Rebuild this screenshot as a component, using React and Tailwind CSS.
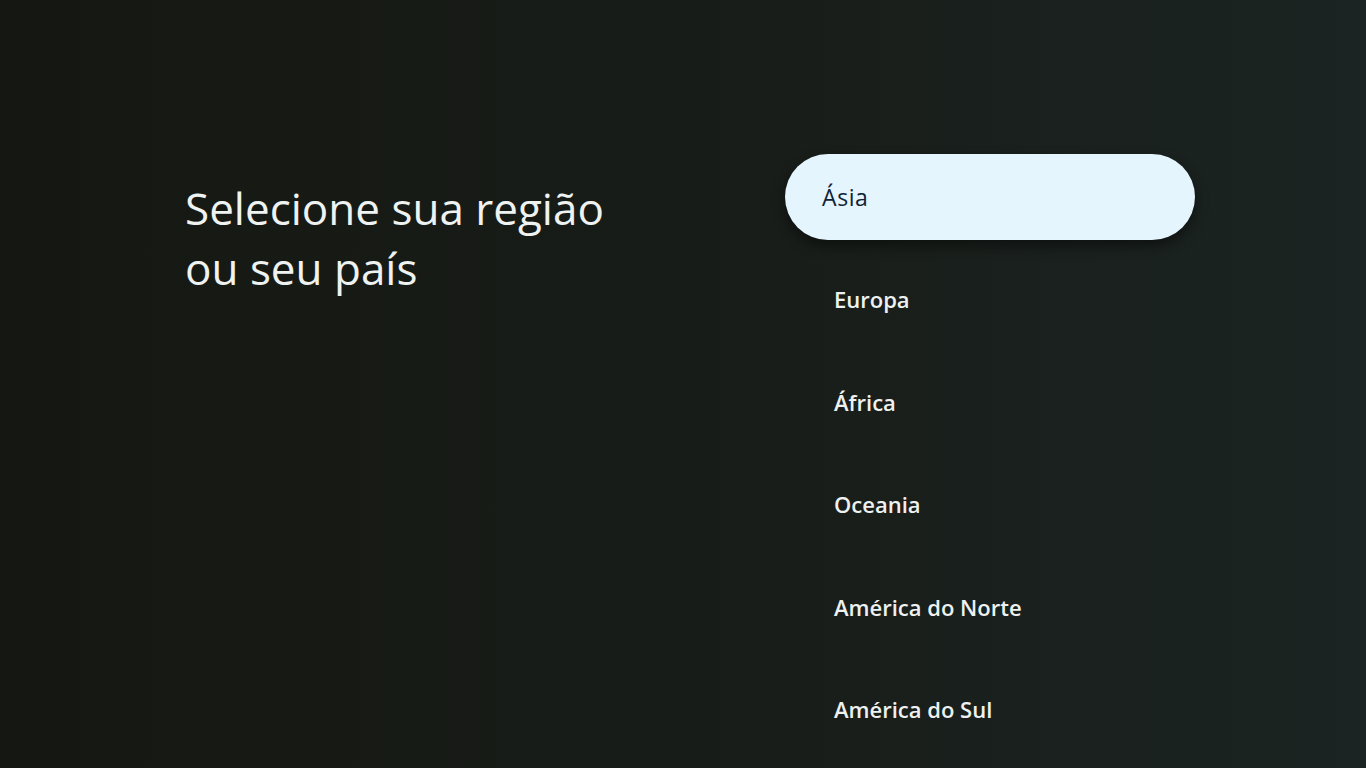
import React from "react";

const regions = ["Ásia", "Europa", "África", "Oceania", "América do Norte", "América do Sul"];

export default function App() {
  const selected = 0;
  return (
    <div className="flex h-screen w-full overflow-hidden bg-gradient-to-r from-[#151812] via-[#181c18] to-[#1b2422] font-['Open_Sans','Liberation_Sans',sans-serif]">
      <div className="w-[785px] shrink-0 pl-[185px] pt-[178px]">
        <h1 className="text-[44px] leading-[60px] font-normal text-[#eef2f1]">
          Selecione sua região
          <br />
          ou seu país
        </h1>
      </div>

      <div className="w-[410px] shrink-0 pt-[146px]">
        <ul className="flex flex-col">
          {regions.map((name, i) =>
            i === selected ? (
              <li key={name} className="flex h-[102.5px] items-center">
                <div className="flex h-[86px] w-full items-center rounded-full bg-[#e5f5fd] pl-[37px] text-[23px] font-normal tracking-[0.6px] text-[#102236] shadow-[0_6px_14px_rgba(0,0,0,0.45)]">
                  {name}
                </div>
              </li>
            ) : (
              <li key={name} className="flex h-[102.5px] items-center pl-[49px] text-[22px] font-semibold text-[#eef1f0]">
                {name}
              </li>
            )
          )}
        </ul>
      </div>
    </div>
  );
}
